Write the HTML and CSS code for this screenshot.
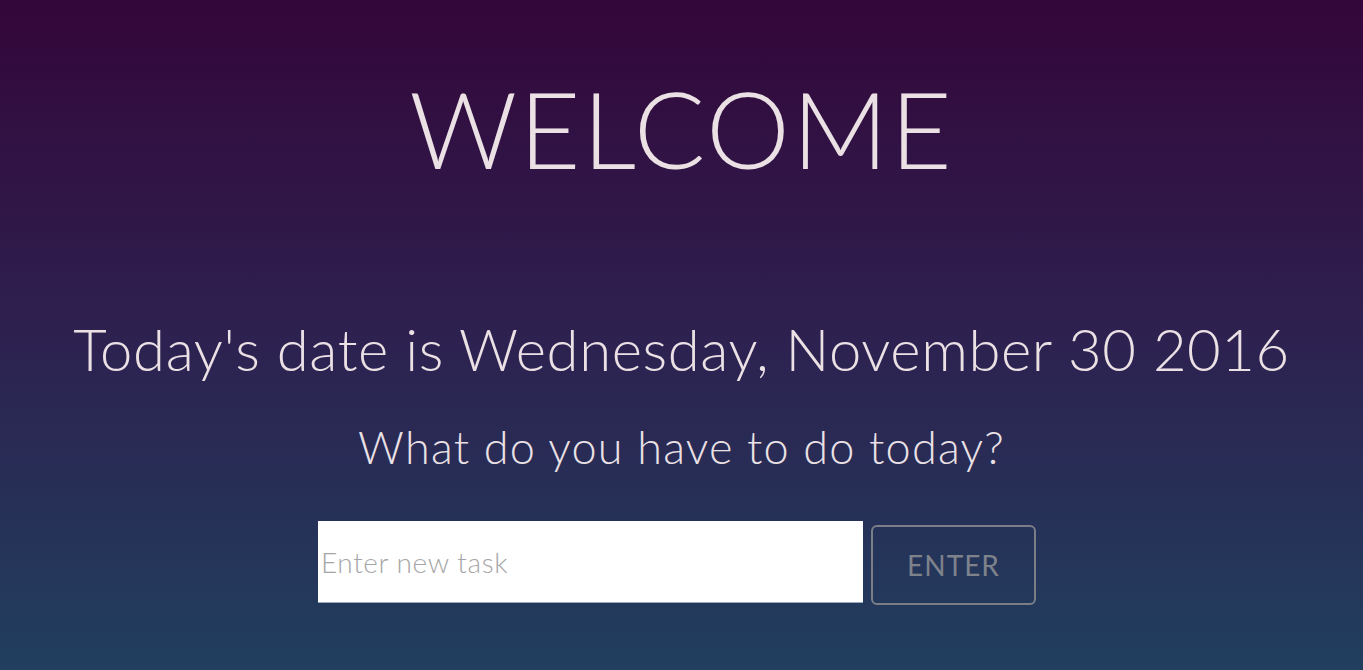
FILE: index.html
```html
<!DOCTYPE html>
<html>
<head>
<meta charset="utf-8">
<link rel="stylesheet" href="styles.css">
</head>
<body>
<main class="page">
  <h1 class="title">WELCOME</h1>
  <h2 class="date">Today's date is Wednesday, November 30 2016</h2>
  <h3 class="question">What do you have to do today?</h3>
  <form class="task-form">
    <input class="task-input" type="text" placeholder="Enter new task">
    <button class="task-btn" type="button">ENTER</button>
  </form>
</main>
</body>
</html>
```
FILE: styles.css
```css
html, body {
  margin: 0;
  padding: 0;
  height: 100%;
}
body {
  background: linear-gradient(to bottom, #34063a 0%, #2d2150 50%, #213f5f 100%);
  font-family: Lato, "Open Sans", sans-serif;
  font-weight: 300;
  color: #ebe1e5;
  overflow: hidden;
}
.page {
  display: flex;
  flex-direction: column;
  align-items: center;
  text-align: center;
}
.title {
  margin: 68px 0 0;
  font-size: 106px;
  font-weight: 300;
  line-height: 120px;
  letter-spacing: 2px;
}
.date {
  margin: 127px 0 0;
  font-size: 58px;
  font-weight: 300;
  line-height: 68px;
  letter-spacing: 0.6px;
}
.question {
  margin: 37px 0 0;
  font-size: 45px;
  font-weight: 300;
  line-height: 54px;
  letter-spacing: 1.2px;
}
.task-form {
  display: flex;
  align-items: flex-start;
  gap: 8px;
  margin: 47px 9px 0 0;
}
.task-input {
  box-sizing: border-box;
  width: 545px;
  height: 82px;
  border: none;
  border-bottom: 1px solid #9aa8c0;
  background: #fff;
  padding: 0 3px;
  font-family: Lato, sans-serif;
  font-weight: 300;
  font-size: 28px;
  letter-spacing: 0.6px;
  color: #333;
  outline: none;
}
.task-input::placeholder {
  color: #a6a6a6;
}
.task-btn {
  box-sizing: border-box;
  width: 165px;
  height: 80px;
  margin-top: 4px;
  border: 2px solid #7b7e86;
  border-radius: 6px;
  background: transparent;
  color: #7e828b;
  font-family: Lato, sans-serif;
  font-weight: 400;
  font-size: 28px;
  letter-spacing: 1px;
}
```
